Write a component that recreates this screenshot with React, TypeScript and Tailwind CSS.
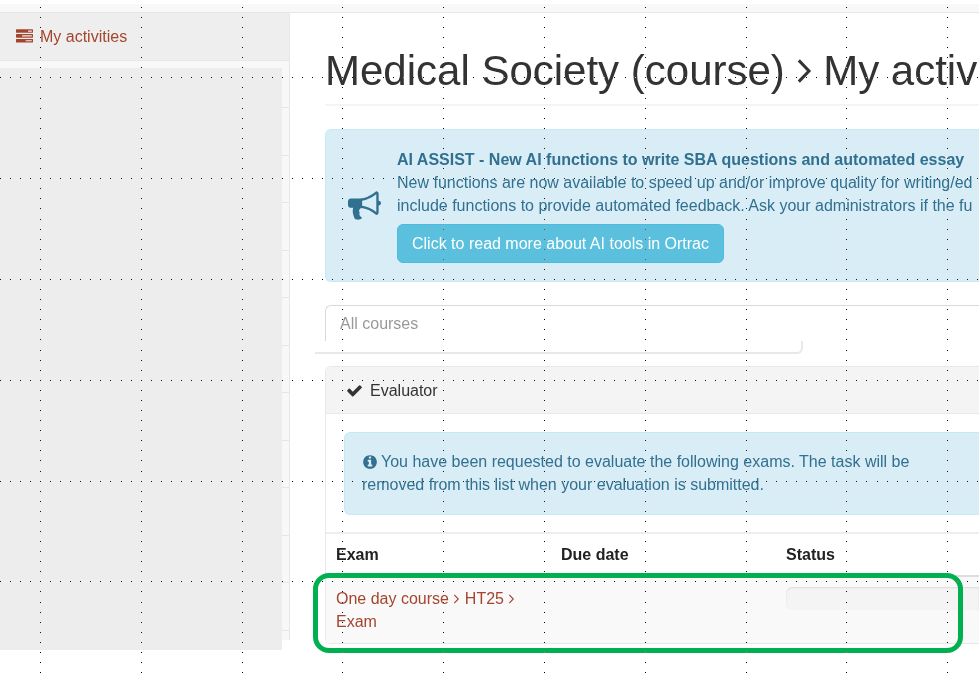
import React from 'react';
import clsx from 'clsx';

const ICONS = {
  tasks:
    'M1024 1408h640v-128h-640v128zm-384-512h1024v-128h-1024v128zm640-512h384v-128h-384v128zm512 832v256q0 26-19 45t-45 19h-1664q-26 0-45-19t-19-45v-256q0-26 19-45t45-19h1664q26 0 45 19t19 45zm0-512v256q0 26-19 45t-45 19h-1664q-26 0-45-19t-19-45v-256q0-26 19-45t45-19h1664q26 0 45 19t19 45zm0-512v256q0 26-19 45t-45 19h-1664q-26 0-45-19t-19-45v-256q0-26 19-45t45-19h1664q26 0 45 19t19 45z',
  bullhorn:
    'M1664 640q53 0 90.5 37.5t37.5 90.5-37.5 90.5-90.5 37.5v384q0 52-38 90t-90 38q-417-347-812-380-58 19-91 66t-31 100.5 40 92.5q-20 33-23 65.5t6 58 33.5 55 48 50 61.5 50.5q-29 58-111.5 83t-168.5 11.5-132-55.5q-7-23-29.5-87.5t-32-94.5-23-89-15-101 3.5-98.5 22-110.5h-122q-66 0-113-47t-47-113v-192q0-66 47-113t113-47h480q435 0 896-384 52 0 90 38t38 90v384zm-128 604v-954q-394 302-768 343v270q377 42 768 341z',
  check:
    'M1671 566q0 40-28 68l-724 724-136 136q-28 28-68 28t-68-28l-136-136-362-362q-28-28-28-68t28-68l136-136q28-28 68-28t68 28l294 295 656-657q28-28 68-28t68 28l136 136q28 28 28 68z',
  info:
    'M1152 1376v-160q0-14-9-23t-23-9h-96v-512q0-14-9-23t-23-9h-320q-14 0-23 9t-9 23v160q0 14 9 23t23 9h96v320h-96q-14 0-23 9t-9 23v160q0 14 9 23t23 9h448q14 0 23-9t9-23zm-128-896v-160q0-14-9-23t-23-9h-192q-14 0-23 9t-9 23v160q0 14 9 23t23 9h192q14 0 23-9t9-23zm640 416q0 209-103 385.5t-279.5 279.5-385.5 103-385.5-103-279.5-279.5-103-385.5 103-385.5 279.5-279.5 385.5-103 385.5 103 279.5 279.5 103 385.5z',
};

interface IconProps {
  name: keyof typeof ICONS;
  className?: string;
}

const Icon: React.FC<IconProps> = ({ name, className }) => (
  <svg viewBox="0 0 1792 1792" fill="currentColor" aria-hidden="true" className={clsx('shrink-0', className)}>
    <path d={ICONS[name]} />
  </svg>
);

/** Breadcrumb separator */
const Angle: React.FC<{ className?: string }> = ({ className }) => (
  <svg viewBox="0 0 15 26" fill="none" stroke="currentColor" aria-hidden="true" className={clsx('inline', className)}>
    <path d="M1.8 2.4L12 13L1.8 23.6" />
  </svg>
);

/** Dotted drawing guides: a dot every STEP, a full line every tenth dot */
const STEP = 10.08;
const GUIDE_COLUMNS = 200;
const GUIDE_ROWS = 120;

const DotGuides: React.FC = () => {
  const dots: React.ReactNode[] = [];
  for (let row = 0; row < GUIDE_ROWS; row++) {
    for (let col = 0; col < GUIDE_COLUMNS; col++) {
      if (row % 10 !== 7 && col % 10 !== 4) continue;
      dots.push(
        <rect
          key={`${row}-${col}`}
          x={Math.floor(0.08 + col * STEP)}
          y={Math.floor(7.34 + row * STEP)}
          width="1"
          height="1"
        />
      );
    }
  }
  return (
    <svg
      aria-hidden="true"
      shapeRendering="crispEdges"
      className="pointer-events-none absolute inset-0 h-full w-full fill-white mix-blend-difference"
    >
      {dots}
    </svg>
  );
};

const Sidebar: React.FC = () => (
  <nav className="relative w-[290px] shrink-0">
    <ul className="flex h-[627px] flex-col border-r border-[#e7e7e7] bg-[#f8f8f8] pb-[9px]">
      <li className="flex-1 border-b border-[#e7e7e7] bg-[#eeeeee]">
        <a href="#activities" className="flex h-full items-center gap-[7px] pl-4 text-[#a4452f]">
          <Icon name="tasks" className="size-[17px]" />
          My activities
        </a>
      </li>
      {Array.from({ length: 12 }, (_, i) => (
        <li key={i} className="flex-1 border-b border-[#e7e7e7]" />
      ))}
    </ul>
    {/* Cover over the remaining menu entries */}
    <div className="absolute top-[55px] right-2 -bottom-[10px] left-0 bg-[#ededed]" />
  </nav>
);

const Announcement: React.FC = () => (
  <section className="flex items-center gap-4 overflow-hidden rounded-l-md border border-r-0 border-[#c6eaf3] bg-[#d9edf7] py-[18px] pl-[22px] whitespace-nowrap text-[#31708f]">
    <Icon name="bullhorn" className="size-[33px]" />
    <div>
      <p className="font-bold">AI ASSIST - New AI functions to write SBA questions and automated essay</p>
      <p>New functions are now available to speed up and/or improve quality for writing/ed</p>
      <p>include functions to provide automated feedback. Ask your administrators if the fu</p>
      <button
        type="button"
        className="mt-[7px] rounded-md border border-[#4dbbdb] bg-[#5bc0de] px-[14px] py-[7px] text-white"
      >
        Click to read more about AI tools in Ortrac
      </button>
    </div>
  </section>
);

const EvaluatorPanel: React.FC = () => (
  <section className="relative mt-3">
    <div className="rounded-l-md border border-r-0 border-[#e8e8e8]">
      <h2 className="flex h-[47px] items-center gap-[7px] rounded-tl-md border-b border-[#e8e8e8] bg-[#f4f4f4] pl-5 text-[#333333]">
        <Icon name="check" className="size-[17px]" />
        Evaluator
      </h2>

      <div className="pt-[18px] pb-[17px] pl-[18px]">
        <p className="rounded-l-md border border-r-0 border-[#c6eaf3] bg-[#d9edf7] px-[17px] pt-[17px] pb-[18px] text-[#31708f]">
          <Icon name="info" className="mr-[3px] inline size-4 align-[-3px]" />
          You have been requested to evaluate the following exams. The task will be removed from this list when your
          evaluation is submitted.
        </p>
      </div>

      <table className="w-full table-fixed border-t-2 border-[#eeeeee] text-left align-top">
        <thead>
          <tr className="border-b-2 border-[#dddddd] text-[#222222]">
            <th className="w-[225px] px-[10px] py-[9px]">Exam</th>
            <th className="w-[225px] px-[10px] py-[9px]">Due date</th>
            <th className="py-[9px] pl-[10px]">Status</th>
          </tr>
        </thead>
        <tbody>
          <tr className="bg-[#f9f9f9] align-top">
            <td className="px-[10px] py-[10px]">
              <a href="#exam" className="text-[#a4452f]">
                One day course <Angle className="h-[10px] w-[7px] align-[0px] stroke-3" /> HT25{' '}
                <Angle className="h-[10px] w-[7px] align-[0px] stroke-3" /> Exam
              </a>
            </td>
            <td />
            <td className="py-[10px] pl-[10px]">
              <div className="h-[23px] rounded-l-md bg-[#f4f4f4] shadow-[inset_0_1px_2px_rgba(0,0,0,0.1)]" />
            </td>
          </tr>
        </tbody>
      </table>
    </div>

    {/* Highlight round the exam row */}
    <div className="pointer-events-none absolute right-4 -bottom-[9px] -left-3 h-20 rounded-2xl border-5 border-[#00b050]" />
  </section>
);

const App: React.FC = () => {
  return (
    <div className="relative min-h-screen overflow-hidden bg-white pt-1 font-['Liberation_Sans',Arial,sans-serif] text-[16px] leading-[23px]">
      <header className="h-[9px] border-b border-[#e7e7e7] bg-[#f8f8f8]" />

      <div className="flex items-start">
        <Sidebar />
        <main className="min-w-0 flex-1 pl-[35px]">
          <h1 className="mb-[23px] overflow-hidden border-b-2 border-[#f4f4f4] pt-[34px] pb-[10px] text-[42px] leading-[47px] whitespace-nowrap text-[#333333]">
            Medical Society (course) <Angle className="h-[26px] w-[15px] align-[1px] stroke-3" /> My activities
          </h1>

          <Announcement />

          <input
            type="text"
            aria-label="Course filter"
            placeholder="All courses"
            className="mt-[23px] block h-[36px] w-full rounded-tl-md border-t border-l border-[#d9d9d9] pt-px pl-[14px] placeholder:text-[#999999]"
          />
          <div className="-ml-[10px] h-[13px] w-[488px] rounded-br-md border-r-2 border-b-2 border-[#e8e8e8]" />

          <EvaluatorPanel />
        </main>
      </div>

      <DotGuides />
    </div>
  );
};

export default App;
